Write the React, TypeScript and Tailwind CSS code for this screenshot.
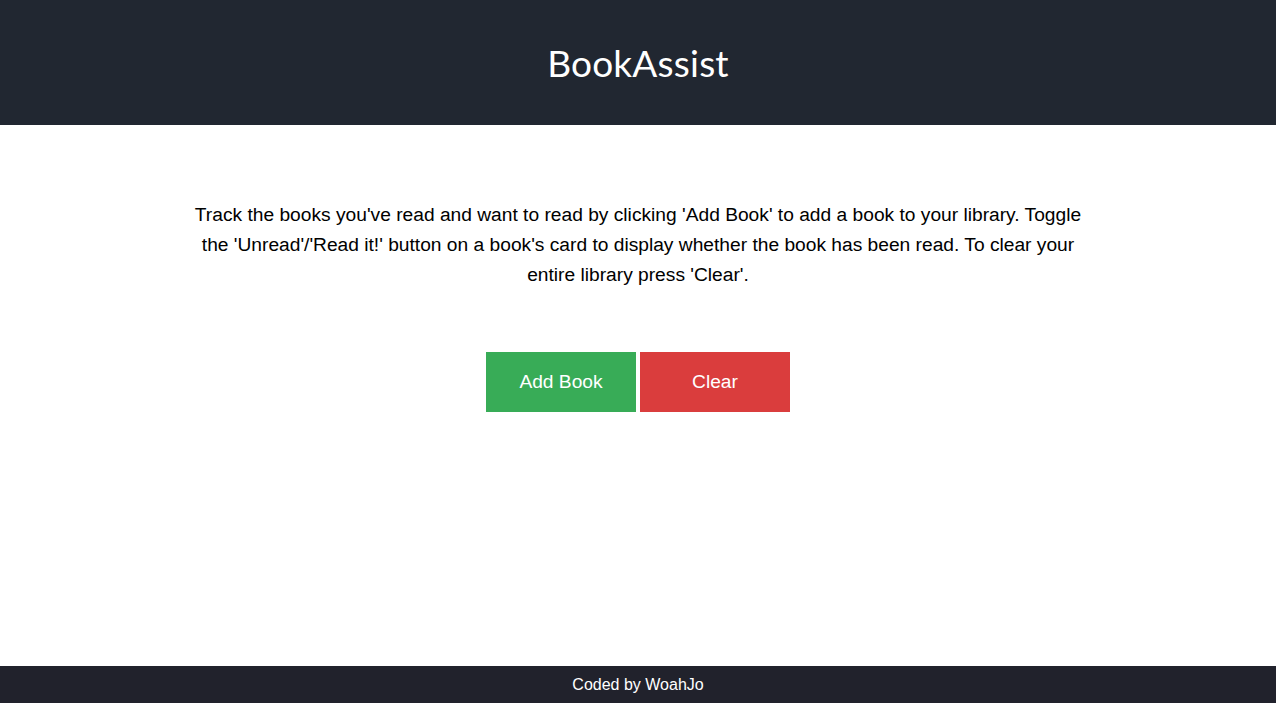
import React from "react";

export default function App() {
  return (
    <div className="flex min-h-[703px] flex-col bg-white font-['Liberation_Sans',Arial,sans-serif]">
      <header className="flex h-[125px] items-center justify-center bg-[#212731]">
        <h1 className="font-['Lato',sans-serif] text-[37px] font-normal tracking-[0.2px] text-white">
          BookAssist
        </h1>
      </header>

      <main className="flex flex-1 flex-col items-center">
        <p className="mt-[75px] w-[900px] text-center text-[19.2px] leading-[30px] text-black">
          Track the books you've read and want to read by clicking 'Add Book' to add a book to your library. Toggle
          the 'Unread'/'Read it!' button on a book's card to display whether the book has been read. To clear your
          entire library press 'Clear'.
        </p>

        <div className="mt-[62px] flex gap-1">
          <button className="h-[60px] w-[150px] bg-[#38ac57] text-[19.2px] text-white">Add Book</button>
          <button className="h-[60px] w-[150px] bg-[#da3d3d] text-[19.2px] text-white">Clear</button>
        </div>
      </main>

      <footer className="flex h-[37px] items-center justify-center bg-[#21222c] text-[16px] text-white">
        Coded by WoahJo
      </footer>
    </div>
  );
}
